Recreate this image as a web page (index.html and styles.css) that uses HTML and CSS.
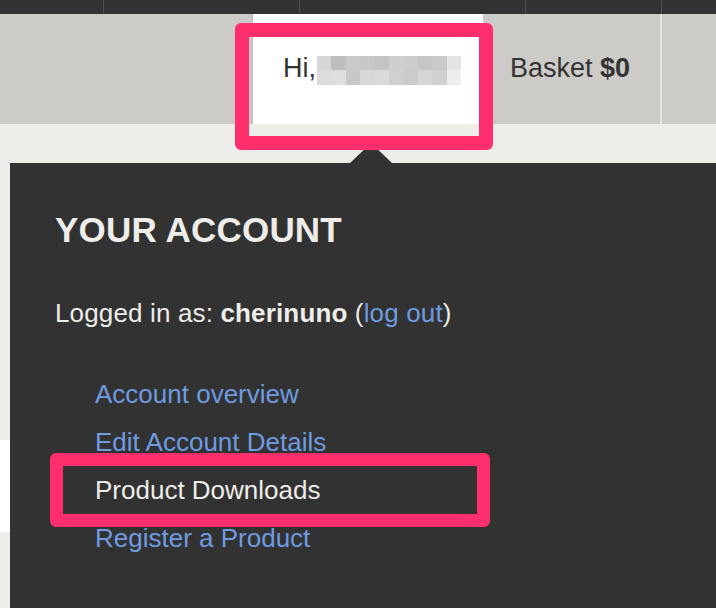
FILE: index.html
```html
<!DOCTYPE html>
<html lang="en">
<head>
<meta charset="utf-8">
<title>Your Account</title>
<link rel="stylesheet" href="styles.css">
</head>
<body>
<div class="topbar">
  <div class="tcell w1"></div>
  <div class="tcell w2"></div>
  <div class="tcell w3"></div>
  <div class="tcell w4"></div>
  <div class="tcell w5"></div>
</div>
<header class="header">
  <div class="hspacer"></div>
  <div class="hi-tab"><span class="hi">Hi,</span><span class="mosaic"><i></i><i></i><i></i><i></i><i></i><i></i><i></i><i></i><i></i><i></i><i></i><i></i><i></i><i></i><i></i><i></i><i></i><i></i><i></i><i></i></span></div>
  <div class="basket">Basket <b>$0</b></div>
  <div class="hsep"></div>
  <div class="hrest"></div>
</header>
<div class="subbar"></div>
<div class="main">
  <div class="side">
    <div class="side-top"></div>
    <div class="side-white"></div>
  </div>
  <section class="panel">
    <span class="arrow"></span>
    <h2 class="panel-title">YOUR ACCOUNT</h2>
    <p class="logged">Logged in as: <b>cherinuno</b> (<a class="link" href="#">log out</a>)</p>
    <ul class="menu">
      <li><a class="link" href="#">Account overview</a></li>
      <li><a class="link" href="#">Edit Account Details</a></li>
      <li><a class="link current" href="#">Product Downloads</a></li>
      <li><a class="link" href="#">Register a Product</a></li>
    </ul>
  </section>
</div>
<div class="hl hl-hi"></div>
<div class="hl hl-dl"></div>
</body>
</html>
```

FILE: styles.css
```css
* { box-sizing: border-box; }
html, body { margin: 0; padding: 0; }
body {
  position: relative;
  width: 716px;
  height: 608px;
  overflow: hidden;
  background: #eeede9;
  font-family: "Liberation Sans", Arial, sans-serif;
  color: #333;
}

/* top dark strip */
.topbar {
  display: flex;
  height: 14px;
  background: #323232;
}
.tcell { height: 14px; }
.tcell + .tcell { border-left: 1px solid #4e4e4e; }
.w1 { width: 103px; }
.w2 { width: 196px; }
.w3 { width: 226px; }
.w4 { width: 136px; }
.w5 { flex: 1; }

/* grey header */
.header {
  display: flex;
  height: 110px;
  background: #cccbc7;
  font-size: 27px;
  line-height: 31px;
}
.hspacer { width: 253px; border-right: 2px solid #c3c2be; }
.hi-tab {
  display: flex;
  align-items: flex-start;
  width: 230px;
  background: #fff;
  padding: 39px 0 0 30px;
  white-space: nowrap;
}
.mosaic {
  display: grid;
  grid-template-columns: repeat(10, 14.4px);
  grid-template-rows: 14px 15px;
  margin: 3px 0 0 1px;
}
.mosaic i { display: block; }
.mosaic i:nth-child(1) { background: #d6d6d6; }
.mosaic i:nth-child(2) { background: #bebebe; }
.mosaic i:nth-child(3) { background: #cacaca; }
.mosaic i:nth-child(4) { background: #c8c8c8; }
.mosaic i:nth-child(5) { background: #c4c4c4; }
.mosaic i:nth-child(6) { background: #cfcfcf; }
.mosaic i:nth-child(7) { background: #cdcdcd; }
.mosaic i:nth-child(8) { background: #c6c6c6; }
.mosaic i:nth-child(9) { background: #cacaca; }
.mosaic i:nth-child(10) { background: #e4e4e4; }
.mosaic i:nth-child(11) { background: #dcdcdc; }
.mosaic i:nth-child(12) { background: #dedede; }
.mosaic i:nth-child(13) { background: #c8c8c8; }
.mosaic i:nth-child(14) { background: #d8d8d8; }
.mosaic i:nth-child(15) { background: #dadada; }
.mosaic i:nth-child(16) { background: #d0d0d0; }
.mosaic i:nth-child(17) { background: #cbcbcb; }
.mosaic i:nth-child(18) { background: #d6d6d6; }
.mosaic i:nth-child(19) { background: #d0d0d0; }
.mosaic i:nth-child(20) { background: #eeeeee; }

.basket {
  width: 177px;
  padding: 39px 0 0 27px;
  white-space: nowrap;
  color: #333;
}
.basket b { font-weight: 700; }
.hsep { width: 2px; background: #e4e3e0; }
.hrest { flex: 1; }

.subbar { height: 39px; }

/* main area */
.main {
  display: flex;
  height: 445px;
}
.side { width: 10px; }
.side-top { height: 277px; }
.side-white { height: 92px; background: #fff; }

.panel {
  position: relative;
  flex: 1;
  background: #323232;
  color: #eeede9;
  padding: 47px 0 0 45px;
}
.arrow {
  position: absolute;
  left: 340px;
  top: -20px;
  width: 0;
  height: 0;
  border-left: 21px solid transparent;
  border-right: 21px solid transparent;
  border-bottom: 20px solid #323232;
}
.panel-title {
  margin: 0;
  font-size: 35px;
  line-height: 40px;
  font-weight: 700;
  letter-spacing: 0.2px;
}
.logged {
  margin: 48px 0 0;
  font-size: 26px;
  line-height: 30px;
  letter-spacing: 0.15px;
}
.logged b { font-weight: 700; }
.menu {
  list-style: none;
  margin: 42px 0 0;
  padding: 0 0 0 40px;
  font-size: 26px;
  line-height: 48px;
}
.link { color: #6f9be1; text-decoration: none; }
.link.current { color: #eeede9; }

/* annotation highlights */
.hl {
  position: absolute;
  border: 14px solid #ff2e6c;
  border-radius: 6px;
}
.hl-hi { left: 235px; top: 23px; width: 258px; height: 127px; }
.hl-dl { left: 50px; top: 453px; width: 440px; height: 74px; border-width: 13px; }
```
